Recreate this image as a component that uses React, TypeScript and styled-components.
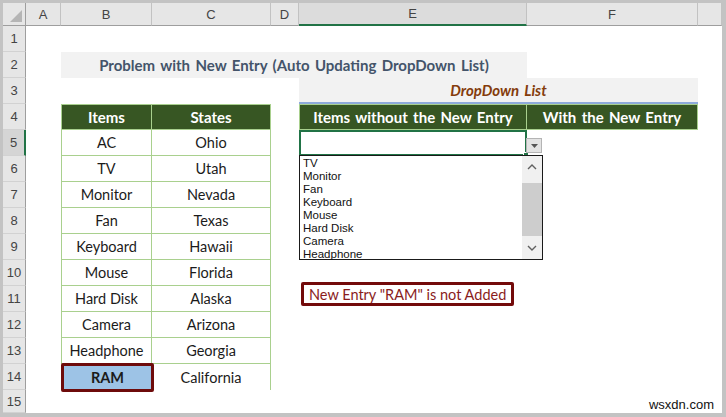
import React from 'react';
import styled, { createGlobalStyle } from 'styled-components';

const GlobalStyle = createGlobalStyle`
  * { box-sizing: border-box; }
  html, body { margin: 0; padding: 0; background: #c3c3c3; }
`;

const items = ['AC', 'TV', 'Monitor', 'Fan', 'Keyboard', 'Mouse', 'Hard Disk', 'Camera', 'Headphone', 'RAM'];
const states = ['Ohio', 'Utah', 'Nevada', 'Texas', 'Hawaii', 'Florida', 'Alaska', 'Arizona', 'Georgia', 'California'];
const columns = ['A', 'B', 'C', 'D', 'E', 'F'];

const Frame = styled.div`
  width: 726px;
  height: 417px;
  padding: 3px 4px 4px 3px;
  background: #c3c3c3;
`;

const Sheet = styled.div`
  position: relative;
  display: grid;
  grid-template-columns: 23px 35px 91px 119px 28px 228px 171px 24px;
  grid-template-rows: 23px repeat(14, 26px) 23px;
  height: 100%;
  background: #fff;
  overflow: hidden;
  font-family: Lato, 'Liberation Sans', sans-serif;
  font-size: 14.5px;
  color: #1b1b1b;
`;

const Corner = styled.div`
  display: flex;
  align-items: flex-end;
  justify-content: flex-end;
  padding: 0 3px 3px 0;
  background: #e6e6e6;
  border-right: 1px solid #9e9e9e;
  border-bottom: 1px solid #9e9e9e;
`;

const ColHead = styled.div<{ $active?: boolean }>`
  display: flex;
  align-items: center;
  justify-content: center;
  background: ${({ $active }) => ($active ? '#dcdcdc' : '#e6e6e6')};
  border-right: 1px solid #c2c2c2;
  border-bottom: ${({ $active }) => ($active ? '2px solid #217346' : '1px solid #9e9e9e')};
  font-family: 'Liberation Sans', sans-serif;
  font-size: 13px;
  color: #444;
`;

const RowHead = styled.div<{ $active?: boolean }>`
  display: flex;
  align-items: center;
  justify-content: center;
  background: ${({ $active }) => ($active ? '#d5d5d5' : '#e6e6e6')};
  border-right: ${({ $active }) => ($active ? '2px solid #217346' : '1px solid #9e9e9e')};
  border-bottom: 1px solid #d2d2d2;
  font-family: 'Liberation Sans', sans-serif;
  font-size: 13px;
  color: #444;
`;

const Blank = styled.div<{ $span?: number }>`
  grid-column: span ${({ $span }) => $span ?? 1};
`;

const Title = styled.div<{ $span: number }>`
  grid-column: span ${({ $span }) => $span};
  display: flex;
  align-items: center;
  justify-content: center;
  background: #f2f2f2;
  font-size: 15px;
  font-weight: 700;
  word-spacing: 1.7px;
  color: #44546a;
`;

const Caption = styled.div<{ $span: number }>`
  grid-column: span ${({ $span }) => $span};
  display: flex;
  align-items: center;
  justify-content: center;
  background: #f2f2f2;
  border-bottom: 2px solid #8eaadb;
  font-size: 15px;
  font-weight: 700;
  font-style: italic;
  word-spacing: 1.7px;
  color: #843c0c;
`;

const HeadCell = styled.div<{ $first?: boolean }>`
  display: flex;
  align-items: center;
  justify-content: center;
  background: #375623;
  border-top: 1px solid #a9d08e;
  border-right: 1px solid #a9d08e;
  border-bottom: 1px solid #a9d08e;
  border-left: ${({ $first }) => ($first ? '1px solid #a9d08e' : 'none')};
  font-size: 15px;
  font-weight: 700;
  word-spacing: 1.7px;
  color: #fff;
`;

const DataCell = styled.div<{ $first?: boolean; $last?: boolean }>`
  display: flex;
  align-items: center;
  justify-content: center;
  border-right: 1px solid #a9d08e;
  border-bottom: ${({ $last }) => ($last ? 'none' : '1px solid #a9d08e')};
  border-left: ${({ $first }) => ($first ? '1px solid #a9d08e' : 'none')};
`;

const MarkedCell = styled.div`
  display: flex;
  align-items: center;
  justify-content: center;
  margin: -1px -2px -2px 0;
  background: #9dc3e6;
  border: 3px solid #6e0b0b;
  border-radius: 2px;
  font-weight: 700;
`;

const ActiveCell = styled.div`
  position: relative;
  border: 2px solid #217346;
`;

const FillHandle = styled.span`
  position: absolute;
  right: -4px;
  bottom: -4px;
  width: 6px;
  height: 6px;
  background: #217346;
  border: 1px solid #fff;
`;

const DropButton = styled.div`
  position: absolute;
  left: calc(100% + 1px);
  top: 6px;
  width: 16px;
  height: 15px;
  display: flex;
  align-items: center;
  justify-content: center;
  background: #e3e3e3;
  border: 1px solid #b4b4b4;
`;

const DropList = styled.div`
  position: absolute;
  z-index: 2;
  left: -2px;
  top: calc(100% + 1px);
  width: 244px;
  height: 105px;
  display: flex;
  background: #fff;
  border: 1px solid #1a1a1a;
`;

const Options = styled.ul`
  flex: 1;
  margin: 0;
  padding: 1px 0 0 3px;
  list-style: none;
  font-family: 'Liberation Sans', sans-serif;
  font-size: 11.5px;
  line-height: 13px;
  color: #111;
`;

const ScrollBar = styled.div`
  width: 20px;
  display: flex;
  flex-direction: column;
  background: #f0f0f0;
`;

const ScrollArrow = styled.div`
  height: 22px;
  display: flex;
  align-items: center;
  justify-content: center;
`;

const ScrollThumb = styled.div`
  height: 53px;
  margin: 5px 0 0;
  background: #cdcdcd;
`;

const ScrollGap = styled.div`
  flex: 1;
`;

const NoteBox = styled.div`
  position: absolute;
  left: 298px;
  top: 279px;
  width: 213px;
  height: 24px;
  display: flex;
  align-items: center;
  padding-left: 5px;
  border: 3px solid #730a0a;
  border-radius: 2px;
  background: #fff;
  color: #8a1c1c;
`;

const Watermark = styled.div`
  position: absolute;
  right: 8px;
  bottom: 1px;
  font-family: 'Liberation Sans', sans-serif;
  font-size: 13px;
  color: #111;
`;

const Chevron = ({ up }: { up?: boolean }) => (
  <svg width="10" height="6" viewBox="0 0 10 6">
    <polyline
      points={up ? '1,5 5,1 9,5' : '1,1 5,5 9,1'}
      fill="none"
      stroke="#606060"
      strokeWidth="1.4"
    />
  </svg>
);

const App = () => {
  return (
    <>
      <GlobalStyle />
      <Frame>
        <Sheet>
          <Corner>
            <svg width="12" height="12" viewBox="0 0 12 12">
              <polygon points="12,0 12,12 0,12" fill="#b5b5b5" />
            </svg>
          </Corner>
          {columns.map((c) => (
            <ColHead key={c} $active={c === 'E'}>{c}</ColHead>
          ))}
          <ColHead />

          <RowHead>1</RowHead>
          <Blank $span={7} />

          <RowHead>2</RowHead>
          <Blank />
          <Title $span={4}>Problem with New Entry (Auto Updating DropDown List)</Title>
          <Blank $span={2} />

          <RowHead>3</RowHead>
          <Blank $span={4} />
          <Caption $span={2}>DropDown List</Caption>
          <Blank />

          <RowHead>4</RowHead>
          <Blank />
          <HeadCell $first>Items</HeadCell>
          <HeadCell>States</HeadCell>
          <Blank />
          <HeadCell $first>Items without the New Entry</HeadCell>
          <HeadCell>With the New Entry</HeadCell>
          <Blank />

          {items.map((item, i) => {
            const last = i === items.length - 1;
            return (
              <React.Fragment key={item}>
                <RowHead $active={i === 0}>{i + 5}</RowHead>
                <Blank />
                {last ? <MarkedCell>{item}</MarkedCell> : <DataCell $first>{item}</DataCell>}
                <DataCell $last={last}>{states[i]}</DataCell>
                <Blank />
                {i === 0 ? (
                  <ActiveCell>
                    <FillHandle />
                    <DropButton>
                      <svg width="7" height="4" viewBox="0 0 7 4">
                        <polygon points="0,0 7,0 3.5,4" fill="#555" />
                      </svg>
                    </DropButton>
                    <DropList>
                      <Options>
                        {items.slice(1, 9).map((o) => (
                          <li key={o}>{o}</li>
                        ))}
                      </Options>
                      <ScrollBar>
                        <ScrollArrow><Chevron up /></ScrollArrow>
                        <ScrollThumb />
                        <ScrollGap />
                        <ScrollArrow><Chevron /></ScrollArrow>
                      </ScrollBar>
                    </DropList>
                  </ActiveCell>
                ) : (
                  <Blank />
                )}
                <Blank $span={2} />
              </React.Fragment>
            );
          })}

          <RowHead>15</RowHead>
          <Blank $span={7} />

          <NoteBox>New Entry "RAM" is not Added</NoteBox>
          <Watermark>wsxdn.com</Watermark>
        </Sheet>
      </Frame>
    </>
  );
};

export default App;
